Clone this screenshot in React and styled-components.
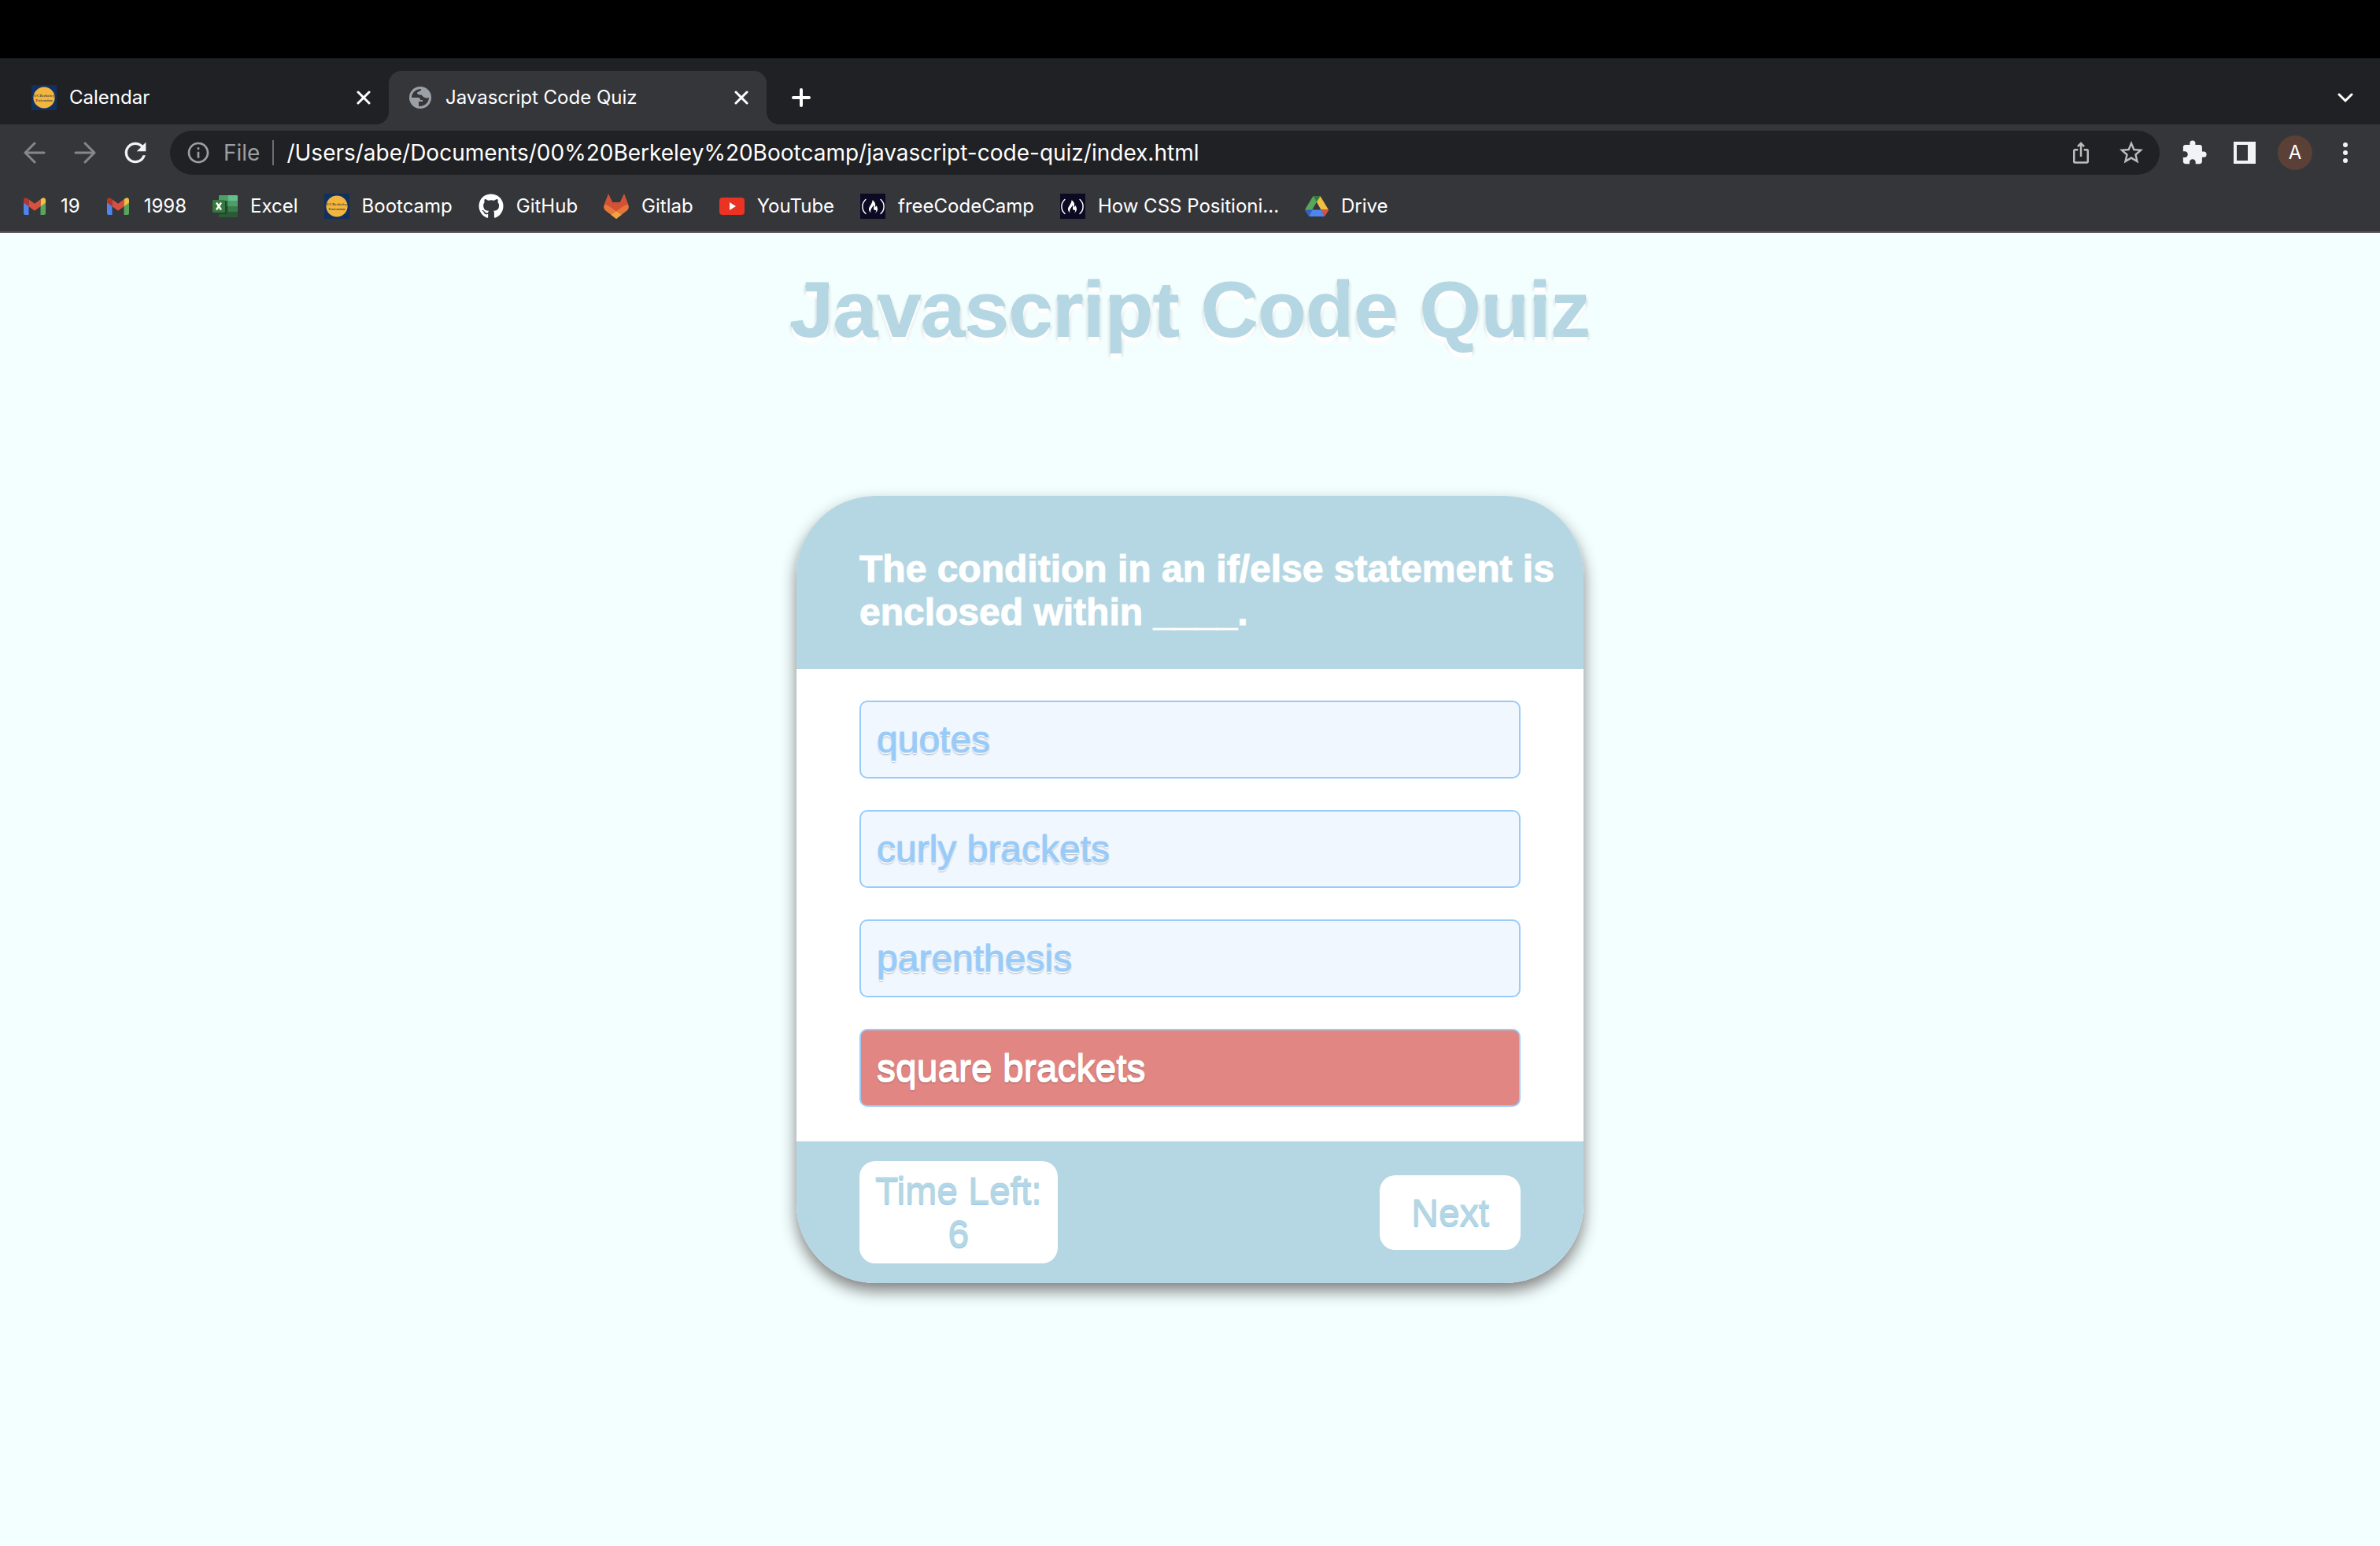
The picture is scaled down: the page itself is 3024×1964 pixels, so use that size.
import React, { useState } from "react";
import styled, { createGlobalStyle, css } from "styled-components";
import { MdExtension, MdInfoOutline, MdIosShare, MdRefresh, MdStarBorder } from "react-icons/md";
import { FaFreeCodeCamp, FaGithub } from "react-icons/fa";

const color = {
  frame: "#202124",
  toolbar: "#35363a",
  text: "#ffffff",
  muted: "#9aa0a6",
  page: "#f3ffff",
  lightBlue: "#b5d7e3",
  skyBlue: "#99cbf8",
  aliceBlue: "#f1f7fe",
  coral: "#e18682",
};

const uiFont = `Inter, Roboto, "Liberation Sans", sans-serif`;
const pageFont = `"Liberation Sans", Helvetica, Arial, sans-serif`;

const GlobalStyle = createGlobalStyle`
  *, *::before, *::after { box-sizing: border-box; }
  html, body { margin: 0; padding: 0; }
  body { background: ${color.page}; font-family: ${pageFont}; }
  button, input { font: inherit; color: inherit; border: 0; margin: 0; padding: 0; background: none; }
  button { cursor: pointer; }
  svg { display: block; flex: none; }
`;

const Screen = styled.div`
  display: flex;
  flex-direction: column;
  min-height: 100vh;
`;

const MenuBar = styled.div`
  height: 74px;
  background: #000;
`;

/* ---------- browser chrome ---------- */

const Chrome = styled.header`
  display: flex;
  flex-direction: column;
  background: ${color.toolbar};
  color: ${color.text};
  font-family: ${uiFont};
  font-size: 24px;
  line-height: 32px;
  border-bottom: 2px solid #5f5b61;
`;

const TabStrip = styled.div`
  display: flex;
  align-items: stretch;
  height: 84px;
  padding: 16px 22px 0 14px;
  background: ${color.frame};
`;

const Tab = styled.div`
  position: relative;
  display: flex;
  align-items: center;
  gap: 16px;
  width: 480px;
  padding: 0 20px 0 26px;
  border-radius: 16px 16px 0 0;

  ${(p) =>
    p.$active &&
    css`
      background: ${color.toolbar};
      &::before,
      &::after {
        content: "";
        position: absolute;
        bottom: 0;
        width: 16px;
        height: 16px;
      }
      &::before {
        right: 100%;
        background: radial-gradient(circle at 0 0, transparent 16px, ${color.toolbar} 16px);
      }
      &::after {
        left: 100%;
        background: radial-gradient(circle at 100% 0, transparent 16px, ${color.toolbar} 16px);
      }
    `}
`;

const TabTitle = styled.button`
  flex: 1;
  text-align: left;
`;

const IconButton = styled.button`
  display: grid;
  place-items: center;
  width: ${(p) => p.$size || 44}px;
  height: ${(p) => p.$size || 44}px;
  flex: none;
  color: ${(p) => p.$color || "#f1f3f4"};
`;

const TabClose = styled(IconButton).attrs({ $size: 24, $color: "#fff" })``;

const StripButton = styled(IconButton)`
  align-self: center;
  margin-left: ${(p) => (p.$end ? "auto" : "22px")};
`;

const Toolbar = styled.div`
  display: flex;
  align-items: center;
  gap: 22px;
  height: 72px;
  padding: 0 22px;
`;

const NavButtons = styled.div`
  display: flex;
  gap: 20px;
`;

const AddressBar = styled.div`
  display: flex;
  align-items: center;
  flex: 1;
  height: 56px;
  padding: 0 14px 0 20px;
  border-radius: 28px;
  background: ${color.frame};
  font-size: 28px;
`;

const SchemeLabel = styled.label`
  display: flex;
  align-items: center;
  gap: 16px;
  padding-right: 16px;
  border-right: 2px solid #6b6e73;
  color: ${color.muted};
`;

const AddressInput = styled.input`
  flex: 1;
  min-width: 0;
  margin: 0 16px;
  outline: none;
`;

const AddressActions = styled.div`
  display: flex;
  gap: 20px;
`;

const Actions = styled.div`
  display: flex;
  align-items: center;
  gap: 20px;
`;

const Avatar = styled.button`
  width: 44px;
  height: 44px;
  border-radius: 50%;
  background: #5b4037;
  font-size: 24px;
  color: #fff;
`;

const Bookmarks = styled.nav`
  display: flex;
  align-items: center;
  gap: 33px;
  height: 64px;
  padding: 0 29px;
`;

const Bookmark = styled.a`
  display: flex;
  align-items: center;
  gap: 16px;
  color: inherit;
  text-decoration: none;
  white-space: nowrap;
`;

/* ---------- quiz page ---------- */

const QuizPage = styled.main`
  flex: 1;
  display: grid;
  grid-template-rows: 1fr auto 1fr;
  justify-items: center;
`;

const Title = styled.h1`
  margin: 40px 0 0;
  align-self: start;
  font-size: 100px;
  font-weight: 700;
  color: ${color.lightBlue};
  -webkit-text-stroke: 1px ${color.lightBlue};
  text-shadow: 0 8px 4px #fff, 0 6px 2px #fff, 0 4px 4px rgba(0, 0, 0, 0.4);

  paint-order: stroke fill;
`;

const Card = styled.section`
  display: flex;
  flex-direction: column;
  width: 1000px;
  max-width: 100%;
  border-radius: 100px;
  overflow: hidden;
  background: #fff;
  box-shadow: 0 10px 20px #808080;
  font-size: 48px;
  line-height: 55px;
`;

const Question = styled.h2`
  margin: 0;
  padding: 65px 0 45px 80px;
  background: ${color.lightBlue};
  color: #fff;
  font-size: 48px;
  font-weight: 700;
  -webkit-text-stroke: 1px #fff;
`;

const Options = styled.div`
  display: flex;
  flex-direction: column;
  gap: 40px;
  padding: 40px 80px 44px;
`;

const Option = styled.button`
  padding: 20px;
  border: 2px solid ${color.skyBlue};
  border-radius: 10px;
  text-align: left;
  background: ${(p) => (p.$wrong ? color.coral : color.aliceBlue)};
  color: ${(p) => (p.$wrong ? "#fff" : color.skyBlue)};
  -webkit-text-stroke: 1px currentColor;
  text-shadow: 0 2px 0 #fff, 0 3px 2px rgba(0, 0, 0, 0.25);
`;

const CardFooter = styled.footer`
  display: flex;
  align-items: center;
  justify-content: space-between;
  padding: 25px 80px;
  background: ${color.lightBlue};
  color: ${color.lightBlue};
  -webkit-text-stroke: 1px ${color.lightBlue};
  text-shadow: 0 2px 0 ${color.skyBlue};
`;

const Timer = styled.div`
  display: flex;
  flex-direction: column;
  align-items: center;
  padding: 10px 20px;
  border-radius: 20px;
  background: #fff;
`;

const NextButton = styled.button`
  padding: 20px 40px;
  border-radius: 20px;
  background: #fff;
  text-shadow: inherit;
`;

/* ---------- icons ---------- */

const Stroke = ({ size, d, width = 3, cap = "round" }) => (
  <svg width={size} height={size} viewBox={`0 0 ${size} ${size}`} fill="none" stroke="currentColor" strokeWidth={width} strokeLinecap={cap} strokeLinejoin="miter">
    <path d={d} />
  </svg>
);

const BerkeleyIcon = () => (
  <svg width="32" height="32" viewBox="0 0 32 32" aria-hidden="true">
    <rect width="32" height="32" fill="#12305f" />
    <circle cx="16" cy="16" r="13.6" fill="#f2b63f" />
    <g fill="#4a4a40" fontFamily="Liberation Serif, serif" fontWeight="700" fontSize="5" textAnchor="middle">
      <text x="16" y="15">UCBerkeley</text>
      <text x="16" y="21">Extension</text>
    </g>
  </svg>
);

const GlobeIcon = () => (
  <svg width="30" height="28" viewBox="0 0 30 28" aria-hidden="true">
    <circle cx="14" cy="14" r="14" fill="#9aa0a6" />
    <path
      fill="#35363a"
      d="M15 3C8 3 3 8 3 14H11C13 14 14 15 14 17H17V19H12V25C20 25.5 25 20 25 13.5C24 15 22 15 20 14C17 13.5 17 11 15 10.5C12 10.5 10 10 10 8C10 6.5 12 6.5 13 6C14.500 5.500 15 4.500 15 3Z"
    />
  </svg>
);

const GmailIcon = () => (
  <svg width="32" height="32" viewBox="-1 0 32 32" aria-hidden="true">
    <path fill="#5085ed" d="M0 9L6.500 13V27H2Q0 27 0 25Z" />
    <path fill="#58a55c" d="M28 9L21.500 13V27H26Q28 27 28 25Z" />
    <path fill="#f1bd42" d="M21.500 7.200L23.500 5.700C25.500 4.300 28 5.700 28 8V11.500L21.500 16.200Z" />
    <path fill="#d85140" d="M6.500 7.200L14 12.800L21.500 7.200V16.200L14 21.800L6.500 16.200Z" />
    <path fill="#b33629" d="M0 8C0 5.700 2.500 4.300 4.500 5.700L6.500 7.200V16.200L0 11.500Z" />
  </svg>
);

const ExcelIcon = () => (
  <svg width="32" height="32" viewBox="0 0 32 32" aria-hidden="true">
    <path fill="#4f9e6a" d="M9 2H20V9H8V3Q8 2 9 2Z" />
    <path fill="#63c08a" d="M20 2H31Q32 2 32 3V9H20Z" />
    <path fill="#397c49" d="M8 9H20V16H8Z" />
    <path fill="#4f9e6a" d="M20 9H32V16H20Z" />
    <path fill="#2b5a37" d="M8 16H20V23H32V29Q32 30 31 30H9Q8 30 8 29Z" />
    <path fill="#397c49" d="M20 16H32V23H20Z" />
    <rect x="1" y="9" width="17" height="17" rx="1" fill="#1f452a" />
    <rect y="8" width="16" height="16" rx="1" fill="#35793f" />
    <path d="M5 11.500L11 20.500M11 11.500L5 20.500" stroke="#fff" strokeWidth="2.400" />
  </svg>
);

const GitlabIcon = () => (
  <svg width="32" height="32" viewBox="0 0 32 32" aria-hidden="true">
    <path fill="#e8763a" d="M6 0.500L0.500 15Q-1 19 3 22L16 32L29 22Q33 19 31.500 15L26 0.500L21 11H11Z" />
    <path fill="#d35135" d="M6 0.500L1 13.500Q6 14.500 16 22.500Q26 14.500 31 13.500L26 0.500L21 11H11Z" />
    <path fill="#f0a446" d="M16 22.500L9.500 27L16 32L22.500 27Z" />
  </svg>
);

const YouTubeIcon = () => (
  <svg width="32" height="32" viewBox="0 0 32 32" aria-hidden="true">
    <rect y="5" width="32" height="22" rx="4" fill="#ea3323" />
    <path fill="#fff" d="M13 11L21 16L13 21Z" />
  </svg>
);

const FccTile = styled.span`
  display: grid;
  place-items: center;
  width: 32px;
  height: 32px;
  background: #0a0a23;
`;

const FccIcon = () => (
  <FccTile>
    <FaFreeCodeCamp size={29} />
  </FccTile>
);

const DriveIcon = () => (
  <svg width="30" height="32" viewBox="0 0 30 32" aria-hidden="true">
    <path fill="#f1bd42" d="M10.500 3H18Q19.500 3 20.200 4.200L30 20.500H20.500Z" />
    <path fill="#58a55c" d="M10.500 3L15 10.500L5.500 27L0.800 21.500Q0 20.500 0.800 19Z" />
    <path fill="#317b40" d="M10.500 3H18Q19 3 19.500 3.500L15 10.500Z" />
    <path fill="#5085ed" d="M9.300 20.500H20.700L25 28.500Q24 29 23 29H7Q6 29 5 28.500Z" />
    <path fill="#315fc4" d="M0 20.500H9.300L5 28.500Q4.500 28.200 4 27.400L0.500 22Q0 21 0 20.500Z" />
    <path fill="#d85140" d="M20.700 20.500H30Q30 21.500 29.500 22.200L26 27.400Q25.500 28.200 25 28.500Z" />
  </svg>
);

const SidePanelIcon = () => (
  <svg width="28" height="28" viewBox="0 0 28 28" aria-hidden="true">
    <path fill="currentColor" fillRule="evenodd" d="M0 0H28V28H0ZM4 4V24H18V4Z" />
  </svg>
);

const DotsIcon = () => (
  <svg width="8" height="28" viewBox="0 0 8 28" fill="currentColor" aria-hidden="true">
    <circle cx="4" cy="4" r="3" />
    <circle cx="4" cy="14" r="3" />
    <circle cx="4" cy="24" r="3" />
  </svg>
);

const CloseIcon = () => <Stroke size={18} d="M2 2L16 16M16 2L2 16" />;

/* ---------- data ---------- */

const bookmarks = [
  { label: "19", Icon: GmailIcon },
  { label: "1998", Icon: GmailIcon },
  { label: "Excel", Icon: ExcelIcon },
  { label: "Bootcamp", Icon: BerkeleyIcon },
  { label: "GitHub", Icon: () => <FaGithub size={32} /> },
  { label: "Gitlab", Icon: GitlabIcon },
  { label: "YouTube", Icon: YouTubeIcon },
  { label: "freeCodeCamp", Icon: FccIcon },
  { label: "How CSS Positioni...", Icon: FccIcon },
  { label: "Drive", Icon: DriveIcon },
];

const options = ["quotes", "curly brackets", "parenthesis", "square brackets"];

const BrowserChrome = () => (
  <Chrome>
    <TabStrip>
      <Tab>
        <BerkeleyIcon />
        <TabTitle>Calendar</TabTitle>
        <TabClose aria-label="Close tab"><CloseIcon /></TabClose>
      </Tab>
      <Tab $active>
        <GlobeIcon />
        <TabTitle>Javascript Code Quiz</TabTitle>
        <TabClose aria-label="Close tab"><CloseIcon /></TabClose>
      </Tab>
      <StripButton $color="#fff" aria-label="New tab">
        <Stroke size={24} width={4} d="M12 2V22M2 12H22" />
      </StripButton>
      <StripButton $end $color="#fff" aria-label="Search tabs">
        <Stroke size={20} d="M2 6L10 14L18 6" />
      </StripButton>
    </TabStrip>
    <Toolbar>
      <NavButtons>
        <IconButton $color="#86878a" aria-label="Back">
          <Stroke size={28} d="M14 2L2 14L14 26M2 14H26" />
        </IconButton>
        <IconButton $color="#86878a" aria-label="Forward">
          <Stroke size={28} d="M14 2L26 14L14 26M26 14H2" />
        </IconButton>
        <IconButton aria-label="Reload"><MdRefresh size={40} /></IconButton>
      </NavButtons>
      <AddressBar>
        <SchemeLabel htmlFor="address">
          <MdInfoOutline size={32} />
          File
        </SchemeLabel>
        <AddressInput
          id="address"
          readOnly
          value="/Users/abe/Documents/00%20Berkeley%20Bootcamp/javascript-code-quiz/index.html"
        />
        <AddressActions>
          <IconButton $color="#bdbdbe" aria-label="Share"><MdIosShare size={30} /></IconButton>
          <IconButton $color="#bdbdbe" aria-label="Bookmark this page"><MdStarBorder size={36} /></IconButton>
        </AddressActions>
      </AddressBar>
      <Actions>
        <IconButton aria-label="Extensions"><MdExtension size={34} /></IconButton>
        <IconButton aria-label="Side panel"><SidePanelIcon /></IconButton>
        <Avatar aria-label="Profile">A</Avatar>
        <IconButton aria-label="Menu"><DotsIcon /></IconButton>
      </Actions>
    </Toolbar>
    <Bookmarks>
      {bookmarks.map(({ label, Icon }) => (
        <Bookmark key={label} href="#">
          <Icon />
          {label}
        </Bookmark>
      ))}
    </Bookmarks>
  </Chrome>
);

export default function App() {
  const [picked, setPicked] = useState("square brackets");

  return (
    <Screen>
      <GlobalStyle />
      <MenuBar />
      <BrowserChrome />
      <QuizPage>
        <Title>Javascript Code Quiz</Title>
        <Card>
          <Question>The condition in an if/else statement is enclosed within ____.</Question>
          <Options>
            {options.map((option) => (
              <Option key={option} $wrong={option === picked} onClick={() => setPicked(option)}>
                {option}
              </Option>
            ))}
          </Options>
          <CardFooter>
            <Timer>
              <span>Time Left:</span>
              <span>6</span>
            </Timer>
            <NextButton>Next</NextButton>
          </CardFooter>
        </Card>
      </QuizPage>
    </Screen>
  );
}
